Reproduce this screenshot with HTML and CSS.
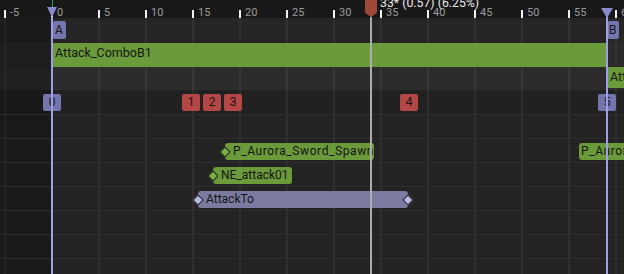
FILE: index.html
```html
<!DOCTYPE html>
<html>
<head>
<meta charset="utf-8">
<link rel="stylesheet" href="styles.css">
</head>
<body>
<div class="timeline">
  <div class="ruler">
    <div class="ticks">
      <div class="tick"><span class="tick-label">-5</span></div>
      <div class="tick"><span class="tick-label">0</span></div>
      <div class="tick"><span class="tick-label">5</span></div>
      <div class="tick"><span class="tick-label">10</span></div>
      <div class="tick"><span class="tick-label">15</span></div>
      <div class="tick"><span class="tick-label">20</span></div>
      <div class="tick"><span class="tick-label">25</span></div>
      <div class="tick"><span class="tick-label">30</span></div>
      <div class="tick"><span class="tick-label">35</span></div>
      <div class="tick"><span class="tick-label">40</span></div>
      <div class="tick"><span class="tick-label">45</span></div>
      <div class="tick"><span class="tick-label">50</span></div>
      <div class="tick"><span class="tick-label">55</span></div>
      <div class="tick"><span class="tick-label">60</span></div>
    </div>
    <div class="scrub-label">33* (0.57) (6.25%)</div>
  </div>

  <div class="tracks">
    <div class="row row-sections">
      <div class="section-key" style="left:53px">A</div>
      <div class="section-key" style="left:607px">B</div>
    </div>
    <div class="row row-montage">
      <div class="segment" style="left:53px;width:553px">Attack_ComboB1</div>
    </div>
    <div class="row row-montage2">
      <div class="segment" style="left:608px;width:60px">Attack_ComboB2</div>
    </div>
    <div class="row row-keys">
      <div class="key key-purple" style="left:43px">0</div>
      <div class="key key-red" style="left:182px">1</div>
      <div class="key key-red" style="left:203px">2</div>
      <div class="key key-red" style="left:224px">3</div>
      <div class="key key-red" style="left:400px">4</div>
      <div class="key key-purple" style="left:598px">5</div>
    </div>
    <div class="row lane"></div>
    <div class="row lane">
      <div class="notify" style="left:225px;width:149px">
        <div class="notify-body notify-green notify-wide">P_Aurora_Sword_Spawn</div>
        <i class="diamond diamond-green"></i>
      </div>
      <div class="notify" style="left:579px;width:70px">
        <div class="notify-body notify-green notify-wide notify-tight">P_Aurora_Sword_Spawn</div>
      </div>
    </div>
    <div class="row lane">
      <div class="notify" style="left:213px;width:79px">
        <div class="notify-body notify-green">NE_attack01</div>
        <i class="diamond diamond-green"></i>
      </div>
    </div>
    <div class="row lane">
      <div class="notify" style="left:198px;width:210px">
        <div class="notify-body notify-state">AttackTo</div>
        <i class="diamond diamond-state"></i>
        <i class="diamond diamond-state diamond-end"></i>
      </div>
    </div>
    <div class="row lane"></div>
    <div class="row lane"></div>
    <div class="row lane"></div>
  </div>

  <div class="range-stub"></div>
  <div class="range-arrow range-arrow-start"></div>
  <div class="range-arrow range-arrow-end"></div>
  <div class="range-line range-line-start"></div>
  <div class="range-line range-line-end"></div>
  <div class="scrub-handle"></div>
  <div class="scrub-line"></div>
</div>
</body>
</html>
```

FILE: styles.css
```css
html, body {
  margin: 0;
  padding: 0;
  background: #232323;
  overflow: hidden;
}

.timeline {
  position: relative;
  width: 624px;
  height: 274px;
  overflow: hidden;
  font-family: Roboto, "Noto Sans", sans-serif;
}

/* ---------- ruler ---------- */
.ruler {
  position: relative;
  height: 18px;
  background: #181818;
  overflow: hidden;
}

.ticks {
  display: flex;
  height: 18px;
  padding-left: 4px;
}

.tick {
  flex: none;
  width: 47px;
  height: 18px;
  display: flex;
  align-items: flex-end;
}

.tick::before {
  content: "";
  flex: none;
  width: 2px;
  height: 8px;
  background: #f2f2f2;
}

.tick-label {
  margin-left: 4px;
  margin-bottom: -1px;
  font-size: 11px;
  line-height: 12px;
  color: #9b9b9b;
  white-space: nowrap;
}

.scrub-label {
  position: absolute;
  left: 380px;
  top: -3px;
  font-size: 12.3px;
  line-height: 12px;
  color: #e6e6e6;
  white-space: nowrap;
}

/* ---------- tracks ---------- */
.row {
  position: relative;
  background-image:
    linear-gradient(90deg, rgba(0, 0, 0, 0.28) 0 52px, transparent 52px),
    linear-gradient(90deg, rgba(255, 255, 255, 0.055) 0 2px, transparent 2px);
  background-size: 100% 100%, 47px 100%;
  background-position: 0 0, 4px 0;
  background-repeat: no-repeat, repeat-x;
}

.row-sections {
  height: 25px;
  background-color: #252525;
}

.row-montage {
  height: 24px;
  background-color: #2a2a2a;
}

.row-montage2 {
  height: 23px;
  background-color: #2c2c2c;
}

.row-keys {
  height: 24px;
  background-color: #212121;
}

.lane {
  height: 23px;
  border-top: 1px solid #2d2d2d;
  background-color: #232323;
}

.section-key {
  position: absolute;
  top: 3px;
  height: 18px;
  padding: 0 3px 0 2px;
  border-radius: 2px;
  background: #7575ad;
  color: #141414;
  font-size: 12px;
  line-height: 18px;
}

.segment {
  position: absolute;
  top: 0;
  height: 24px;
  box-sizing: border-box;
  padding: 2px 0 0 2px;
  background: #6b9a3a;
  color: #161616;
  font-size: 12.5px;
  line-height: 15px;
  white-space: nowrap;
  overflow: hidden;
}

.row-montage2 .segment {
  height: 21px;
}

.key {
  position: absolute;
  top: 4px;
  width: 18px;
  height: 17px;
  border-radius: 2px;
  color: #141414;
  font-size: 12px;
  line-height: 17px;
  text-align: center;
}

.key-red {
  background: #b44646;
}

.key-purple {
  background: #7575ad;
}

/* ---------- notifies ---------- */
.notify {
  position: absolute;
  top: 4px;
  height: 17px;
}

.notify-body {
  height: 100%;
  box-sizing: border-box;
  padding-left: 8px;
  border-radius: 3px;
  color: #141414;
  font-size: 12px;
  line-height: 17px;
  white-space: nowrap;
  overflow: hidden;
}

.notify-wide {
  letter-spacing: 0.6px;
}

.notify-tight {
  padding-left: 2px;
}

.notify-green {
  background: #6b9a3a;
}

.notify-state {
  background: #7b7ba1;
}

.diamond {
  position: absolute;
  top: 50%;
  left: 0;
  width: 6px;
  height: 6px;
  margin: -4px 0 0 -4px;
  border: 1px solid #1b1b1b;
  transform: rotate(45deg);
}

.diamond-end {
  left: 100%;
}

.diamond-green {
  background: #7cb042;
}

.diamond-state {
  background: #b9b9e6;
}

/* ---------- overlays ---------- */
.range-stub {
  position: absolute;
  left: 52px;
  top: 0;
  width: 1px;
  height: 7px;
  background: #3d9f3d;
}

.range-arrow {
  position: absolute;
  height: 10px;
  background: #8b8bcc;
  clip-path: polygon(0 0, 100% 0, 50% 100%);
}

.range-arrow-start {
  left: 47px;
  top: 7px;
  width: 10px;
}

.range-arrow-end {
  left: 601px;
  top: 8px;
  width: 12px;
}

.range-line {
  position: absolute;
  top: 17px;
  bottom: 0;
  width: 2px;
  background: #9e9ee9;
}

.range-line-start {
  left: 51px;
}

.range-line-end {
  left: 606px;
}

.scrub-handle {
  position: absolute;
  left: 365px;
  top: -2px;
  width: 12px;
  height: 19px;
  background: #9f4838;
  clip-path: polygon(0 0, 100% 0, 100% 78%, 50% 100%, 0 78%);
}

.scrub-line {
  position: absolute;
  left: 370px;
  top: 17px;
  bottom: 0;
  width: 2px;
  background: #adadad;
}
```
